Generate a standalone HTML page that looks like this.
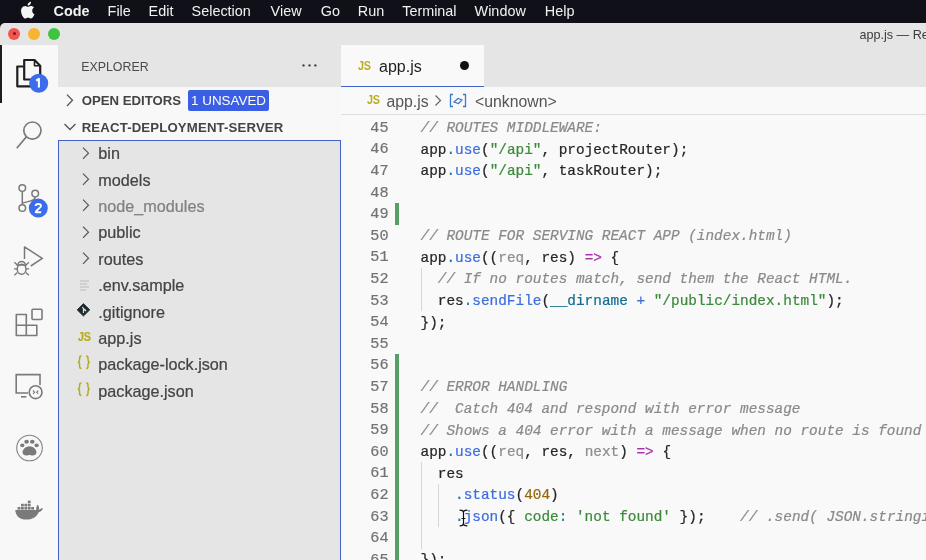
<!DOCTYPE html>
<html><head><meta charset="utf-8">
<style>
*{margin:0;padding:0;box-sizing:border-box;-webkit-font-smoothing:antialiased}
.code,.row{-webkit-text-stroke:0.22px currentColor}
html,body{width:926px;height:560px;overflow:hidden;background:#101018;font-family:"Liberation Sans",sans-serif}
.abs{position:absolute}
#menubar{left:0;top:0;width:926px;height:23px;background:#101018;color:#f2f2f2;font-size:14.4px}
#menubar span{position:absolute;top:3.3px;line-height:17px;white-space:nowrap}
#win{left:0;top:22.6px;width:926px;height:538px;background:#e5e5e5;border-top-left-radius:5px}
.tl{position:absolute;top:27.5px;width:12px;height:12px;border-radius:50%}
#title{left:859.5px;top:26.5px;font-size:12.6px;color:#3a3a3a;white-space:nowrap;line-height:16px}
#act{left:0;top:45px;width:58px;height:515px;background:#f8f8f8}
#actind{left:0;top:45px;width:2.4px;height:57.6px;background:#1e1e1e}
#side{left:58px;top:87px;width:283px;height:473px;background:#f8f8f8}
#sidehead{left:58px;top:45px;width:283px;height:42px;background:#e5e5e5}
#tree{left:58px;top:140px;width:283px;height:430px;background:#e5e5e5;border:1px solid #4262c8}
.row{position:absolute;left:0;height:26.4px;line-height:26.4px;font-size:16.2px;color:#444;white-space:nowrap}
#editor{left:341px;top:87px;width:585px;height:473px;background:#f9f9f9}
#tabbar{left:341px;top:45px;width:585px;height:42px;background:#e5e5e5}
#tab{left:341px;top:45px;width:143px;height:42px;background:#f9f9f9;border-bottom:1px solid #4262c8}
.code{position:absolute;left:341px;width:585px;height:21.6px;line-height:21.6px;font-family:"Liberation Mono",monospace;font-size:14.4px;white-space:pre;color:#262626}
.ln{position:absolute;top:-0.5px;left:0;width:47.5px;text-align:right;color:#737373;font-size:15.2px}
.tx{position:absolute;left:79.5px}
.c{color:#8a8a8a;font-style:italic}
.s{color:#3b8a3b}
.f{color:#3d6ddd}
.d{color:#1b7a99}
.k{color:#a631a6}
.n{color:#94680a}
.g{color:#8c8c8c}
.v{color:#136d8f}
.js{position:absolute;font-size:12.3px;font-weight:bold;color:#b8ae1e;letter-spacing:-0.3px;line-height:14px;transform:scaleX(0.88);transform-origin:0 0}
</style></head>
<body><div style="position:absolute;left:0;top:0;width:926px;height:560px;will-change:transform">
<div id="menubar" class="abs"><span style="left:53.6px;font-weight:bold;">Code</span><span style="left:107.6px;">File</span><span style="left:148.6px;">Edit</span><span style="left:191.6px;">Selection</span><span style="left:270.6px;">View</span><span style="left:320.8px;">Go</span><span style="left:357.8px;">Run</span><span style="left:402.2px;">Terminal</span><span style="left:474.6px;">Window</span><span style="left:544.8px;">Help</span></div>
<div id="win" class="abs"></div>
<div class="tl abs" style="left:8px;background:#f0564e"></div>
<div class="tl abs" style="left:28px;background:#f6b52f"></div>
<div class="tl abs" style="left:48px;background:#3ec43e"></div>
<div class="abs" style="left:12.5px;top:32px;width:3px;height:3px;border-radius:50%;background:#8a1010"></div>
<div id="title" class="abs">app.js — React-Deployment-Server</div>
<div id="act" class="abs"></div>
<div id="actind" class="abs"></div>
<div id="side" class="abs"></div>
<svg class="abs" style="left:0;top:0" width="58" height="560" viewBox="0 0 58 560">
 <!-- apple -->
 <g fill="#f4f4f4" transform="translate(1,-1.2)">
  <path d="M31.2 11.9c0-2.1 1.7-3.1 1.8-3.2-1-1.4-2.5-1.6-3-1.6-1.3-.1-2.5.8-3.1.8-.7 0-1.6-.8-2.7-.8-1.4 0-2.7.8-3.4 2.1-1.5 2.5-.4 6.3 1 8.4.7 1 1.5 2.1 2.6 2.1 1 0 1.4-.7 2.7-.7 1.2 0 1.6.7 2.7.7 1.1 0 1.8-1 2.5-2 .8-1.2 1.1-2.3 1.1-2.3s-2.2-.9-2.2-3.5z"/>
  <path d="M29.1 5.6c.6-.7 1-1.7.9-2.7-.8 0-1.9.6-2.5 1.3-.5.6-1 1.6-.9 2.6.9.1 1.9-.5 2.5-1.2z"/>
 </g>
 <!-- files -->
 <g fill="none" stroke="#1f1f1f" stroke-width="2.2" stroke-linejoin="round">
  <path d="M23.5 66.5 H17.3 V86.3 H31"/>
  <path d="M24.2 60 H34.5 L40.2 65.7 V79.5 H24.2 Z"/>
  <path d="M34.5 60.5 V65.7 H40" stroke-width="1.6"/>
 </g>
 <circle cx="38.7" cy="83.2" r="9.5" fill="#3a6cec"/>
 <path d="M36.2 80.6 L38.9 78.9 V87.6" fill="none" stroke="#fff" stroke-width="2.1" stroke-linejoin="round"/>
 <!-- search -->
 <g fill="none" stroke="#7a7a7a" stroke-width="1.7">
  <circle cx="32.4" cy="130.6" r="8.6"/>
  <path d="M26.3 136.9 L16.8 148.3"/>
 </g>
 <!-- source control -->
 <g fill="none" stroke="#7a7a7a" stroke-width="1.5">
  <circle cx="22.3" cy="188" r="3.3"/>
  <circle cx="35.2" cy="193.6" r="3.3"/>
  <circle cx="22.3" cy="208" r="3.3"/>
  <path d="M22.3 191.3 V204.7"/>
  <path d="M35.2 196.9 C35.2 201 28 201.5 22.6 203"/>
 </g>
 <circle cx="38.3" cy="208.1" r="9.5" fill="#3a6cec"/>
 <path d="M35.6 206 C35.6 203.4 41 203.4 41 206 C41 208 36.5 209.5 35.7 212.2 H41.2" fill="none" stroke="#fff" stroke-width="1.9" stroke-linejoin="round"/>
 <!-- run & debug -->
 <g fill="none" stroke="#7a7a7a" stroke-width="1.5" stroke-linejoin="round">
  <path d="M24.5 259 V246.9 L42.3 258.4 L30.8 266"/>
  <path d="M17.8 265 a3.8 3.6 0 0 1 7.6 0"/>
  <ellipse cx="21.6" cy="269.2" rx="4.4" ry="5"/>
  <path d="M16.3 265.2 H27 M14.3 262.3 L17.3 265 M14 268.9 H17.2 M14.3 275.2 L17.4 272.5 M28.9 262.3 L25.9 265 M29.2 268.9 H26 M28.9 275.2 L25.8 272.5" stroke-width="1.3"/>
 </g>
 <!-- extensions -->
 <g fill="none" stroke="#7a7a7a" stroke-width="1.6" stroke-linejoin="round">
  <path d="M16.3 314.5 H26.3 V325.3 H36.8 V335.5 H16.3 Z"/>
  <path d="M16.3 325.3 H26.3 V335.5"/>
  <rect x="32" y="309.2" width="10" height="10.3" rx="1"/>
 </g>
 <!-- remote explorer -->
 <g fill="none" stroke="#7a7a7a" stroke-width="1.6">
  <path d="M28 393 H16.2 V374.6 H40 V385"/>
  <path d="M21 396.8 H26.3"/>
  <circle cx="35.6" cy="392.2" r="6.4"/>
  <path d="M33 390.5 L34.6 392.2 L33 393.9 M38.3 390.5 L36.7 392.2 L38.3 393.9" stroke-width="1.1"/>
 </g>
 <!-- paw -->
 <circle cx="29.5" cy="448" r="12.8" fill="none" stroke="#858585" stroke-width="1.1"/>
 <g fill="#7a7a7a">
  <ellipse cx="26.6" cy="441.8" rx="2.3" ry="2"/>
  <ellipse cx="32.3" cy="441.8" rx="2.3" ry="2"/>
  <ellipse cx="22.3" cy="445.3" rx="2.1" ry="1.9"/>
  <ellipse cx="36.6" cy="445.3" rx="2.1" ry="1.9"/>
  <path d="M29.5 446.2 C25 446.2 22.5 450 22.5 452.3 C22.5 454.8 24.6 455.5 26.3 455.5 C27.8 455.5 28.5 454.9 29.5 454.9 C30.5 454.9 31.2 455.5 32.7 455.5 C34.4 455.5 36.5 454.8 36.5 452.3 C36.5 450 34 446.2 29.5 446.2Z"/>
 </g>
 <!-- docker -->
 <g fill="#7a7a7a">
  <path d="M15.2 510 H38 C39.5 510 40.5 509 41.5 508.3 L43 508.6 C42.3 510.5 40.8 511.8 38.7 512.2 C36.5 517 32.5 519.6 26 519.6 C20 519.6 16 516.5 15.2 510 Z"/>
  <path d="M36.2 510 C36.1 507.5 36.7 505.5 37.8 504.8 C38.9 506.2 39.4 508 38.8 510 Z"/>
  <rect x="17.6" y="507" width="2.8" height="2.6"/>
  <rect x="21" y="507" width="2.8" height="2.6"/>
  <rect x="24.4" y="507" width="2.8" height="2.6"/>
  <rect x="27.8" y="507" width="2.8" height="2.6"/>
  <rect x="31.2" y="507" width="2.8" height="2.6"/>
  <rect x="21" y="503.8" width="2.8" height="2.6"/>
  <rect x="24.4" y="503.8" width="2.8" height="2.6"/>
  <rect x="27.8" y="503.8" width="2.8" height="2.6"/>
  <rect x="27.8" y="500.6" width="2.8" height="2.6"/>
 </g>
</svg>

<div id="sidehead" class="abs"></div>
<div id="tree" class="abs"></div>

<div class="abs" style="left:81.2px;top:58.5px;font-size:12.4px;line-height:16px;color:#4a4a4a">EXPLORER</div>
<svg class="abs" style="left:299px;top:63px" width="20" height="4" viewBox="0 0 20 4"><circle cx="4.5" cy="2.4" r="1.2" fill="#444"/><circle cx="10.5" cy="2.4" r="1.2" fill="#444"/><circle cx="16.4" cy="2.4" r="1.2" fill="#444"/></svg>
<div class="abs" style="left:58px;top:87px;width:283px;height:26.4px">
  <svg class="abs" style="left:7.2px;top:7px" width="10" height="13" viewBox="0 0 10 13"><path d="M2 0.6 L7.5 6.3 L2 12" fill="none" stroke="#555" stroke-width="1.3"/></svg>
  <div class="abs" style="left:23.7px;top:1px;line-height:26.4px;font-size:13.2px;font-weight:bold;color:#444">OPEN EDITORS</div>
  <div class="abs" style="left:130.1px;top:3.2px;width:80.9px;height:20.4px;background:#3b5fe4;border-radius:2px;color:#fff;font-size:13.4px;line-height:21.4px;text-align:center">1 UNSAVED</div>
</div>
<div class="abs" style="left:58px;top:113.4px;width:283px;height:26.4px">
  <svg class="abs" style="left:5px;top:9px" width="14" height="10" viewBox="0 0 14 10"><path d="M1.5 2 L7 7.5 L12.5 2" fill="none" stroke="#555" stroke-width="1.3"/></svg>
  <div class="abs" style="left:23.7px;top:2px;line-height:26.4px;font-size:13.2px;font-weight:bold;color:#444;letter-spacing:0.15px">REACT-DEPLOYMENT-SERVER</div>
</div>

<div class="row" style="left:58px;top:140.1px;width:283px"><svg class="abs" style="left:24px;top:6.5px" width="8" height="13" viewBox="0 0 8 13"><path d="M1 0.6 L6.5 6.2 L1 11.8" fill="none" stroke="#555" stroke-width="1.2"/></svg><span class="abs" style="left:40.3px;color:#444">bin</span></div>
<div class="row" style="left:58px;top:166.5px;width:283px"><svg class="abs" style="left:24px;top:6.5px" width="8" height="13" viewBox="0 0 8 13"><path d="M1 0.6 L6.5 6.2 L1 11.8" fill="none" stroke="#555" stroke-width="1.2"/></svg><span class="abs" style="left:40.3px;color:#444">models</span></div>
<div class="row" style="left:58px;top:192.9px;width:283px"><svg class="abs" style="left:24px;top:6.5px" width="8" height="13" viewBox="0 0 8 13"><path d="M1 0.6 L6.5 6.2 L1 11.8" fill="none" stroke="#555" stroke-width="1.2"/></svg><span class="abs" style="left:40.3px;color:#808080">node_modules</span></div>
<div class="row" style="left:58px;top:219.3px;width:283px"><svg class="abs" style="left:24px;top:6.5px" width="8" height="13" viewBox="0 0 8 13"><path d="M1 0.6 L6.5 6.2 L1 11.8" fill="none" stroke="#555" stroke-width="1.2"/></svg><span class="abs" style="left:40.3px;color:#444">public</span></div>
<div class="row" style="left:58px;top:245.7px;width:283px"><svg class="abs" style="left:24px;top:6.5px" width="8" height="13" viewBox="0 0 8 13"><path d="M1 0.6 L6.5 6.2 L1 11.8" fill="none" stroke="#555" stroke-width="1.2"/></svg><span class="abs" style="left:40.3px;color:#444">routes</span></div>
<div class="row" style="left:58px;top:272.1px;width:283px"><svg class="abs" style="left:20px;top:6px" width="14" height="14" viewBox="0 0 14 14"><path d="M2 3h9M2 6h7M2 9h9M2 12h6" stroke="#c8c8c8" stroke-width="1.4"/></svg><span class="abs" style="left:40.3px;color:#444">.env.sample</span></div>
<div class="row" style="left:58px;top:298.5px;width:283px"><svg class="abs" style="left:19px;top:4.5px" width="14" height="14" viewBox="0 0 14 14"><path d="M6.45 0.6 L12.8 6.85 L6.45 13.1 L0.1 6.85Z" fill="#1f2a30" stroke="#1f2a30" stroke-width="0.8" stroke-linejoin="round"/><path d="M5.2 4.2 L8.4 7.4 M6.4 5.4 V10" stroke="#e8e8e8" stroke-width="1.1"/><circle cx="8.4" cy="7.4" r="0.9" fill="#e8e8e8"/></svg><span class="abs" style="left:40.3px;color:#444">.gitignore</span></div>
<div class="row" style="left:58px;top:324.9px;width:283px"><div class="js" style="left:20px;top:5px">JS</div><span class="abs" style="left:40.3px;color:#444">app.js</span></div>
<div class="row" style="left:58px;top:351.3px;width:283px"><svg class="abs" style="left:19px;top:4px" width="14" height="15" viewBox="0 0 14 15"><g fill="none" stroke="#b3ab25" stroke-width="1.5"><path d="M4.4 1 C2.4 1 2.6 2.5 2.6 4.5 C2.6 6 2 7 1 7.2 C2 7.4 2.6 8.4 2.6 10 C2.6 12 2.4 13.4 4.4 13.4"/><path d="M9.2 1 C11.2 1 11 2.5 11 4.5 C11 6 11.6 7 12.6 7.2 C11.6 7.4 11 8.4 11 10 C11 12 11.2 13.4 9.2 13.4"/></g></svg><span class="abs" style="left:40.3px;color:#444">package-lock.json</span></div>
<div class="row" style="left:58px;top:377.7px;width:283px"><svg class="abs" style="left:19px;top:4px" width="14" height="15" viewBox="0 0 14 15"><g fill="none" stroke="#b3ab25" stroke-width="1.5"><path d="M4.4 1 C2.4 1 2.6 2.5 2.6 4.5 C2.6 6 2 7 1 7.2 C2 7.4 2.6 8.4 2.6 10 C2.6 12 2.4 13.4 4.4 13.4"/><path d="M9.2 1 C11.2 1 11 2.5 11 4.5 C11 6 11.6 7 12.6 7.2 C11.6 7.4 11 8.4 11 10 C11 12 11.2 13.4 9.2 13.4"/></g></svg><span class="abs" style="left:40.3px;color:#444">package.json</span></div>

<div id="editor" class="abs"></div>
<div id="tabbar" class="abs"></div>
<div id="tab" class="abs"></div>

<div class="js" style="left:358.3px;top:58.5px">JS</div>
<div class="abs" style="left:379px;top:56.5px;font-size:16px;color:#1f1f1f;line-height:20px">app.js</div>
<div class="abs" style="left:459.5px;top:60.5px;width:9.5px;height:9.5px;border-radius:50%;background:#111"></div>
<div class="js" style="left:366.5px;top:93.3px">JS</div>
<div class="abs" style="left:386.5px;top:91.5px;font-size:15.8px;color:#555;line-height:20px">app.js</div>
<svg class="abs" style="left:434px;top:94px" width="8" height="13" viewBox="0 0 8 13"><path d="M1.5 1.5 L6.5 6.5 L1.5 11.5" fill="none" stroke="#666" stroke-width="1.2"/></svg>
<svg class="abs" style="left:449px;top:93px" width="18" height="15" viewBox="0 0 18 15"><path d="M4 1.5 H1.5 V13.5 H4 M14 1.5 H16.5 V13.5 H14" fill="none" stroke="#3a7bc8" stroke-width="1.3"/><path d="M5 9 L9 5.5 L13 7 L9.5 10.5Z M5 9 L9.5 10.5" fill="none" stroke="#3a7bc8" stroke-width="1.2"/></svg>
<div class="abs" style="left:475px;top:91.5px;font-size:15.8px;color:#555;line-height:20px">&lt;unknown&gt;</div>
<div class="abs" style="left:341px;top:113.6px;width:585px;height:1px;background:#dedede"></div>

<div class="code" style="top:118.2px"><span class="ln">45</span><span class="tx"><span class="c">// ROUTES MIDDLEWARE:</span></span></div>
<div class="code" style="top:139.8px"><span class="ln">46</span><span class="tx">app<span class="d">.</span><span class="f">use</span>(<span class="s">"/api"</span>, projectRouter);</span></div>
<div class="code" style="top:161.4px"><span class="ln">47</span><span class="tx">app<span class="d">.</span><span class="f">use</span>(<span class="s">"/api"</span>, taskRouter);</span></div>
<div class="code" style="top:183.0px"><span class="ln">48</span><span class="tx"></span></div>
<div class="code" style="top:204.6px"><span class="ln">49</span><span class="tx"></span></div>
<div class="code" style="top:226.2px"><span class="ln">50</span><span class="tx"><span class="c">// ROUTE FOR SERVING REACT APP (index.html)</span></span></div>
<div class="code" style="top:247.8px"><span class="ln">51</span><span class="tx">app<span class="d">.</span><span class="f">use</span>((<span class="g">req</span>, res) <span class="k">=&gt;</span> {</span></div>
<div class="code" style="top:269.4px"><span class="ln">52</span><span class="tx">  <span class="c">// If no routes match, send them the React HTML.</span></span></div>
<div class="code" style="top:291.0px"><span class="ln">53</span><span class="tx">  res<span class="d">.</span><span class="f">sendFile</span>(<span class="v">__dirname</span><span class="f"> + </span><span class="s">"/public/index.html"</span>);</span></div>
<div class="code" style="top:312.6px"><span class="ln">54</span><span class="tx">});</span></div>
<div class="code" style="top:334.2px"><span class="ln">55</span><span class="tx"></span></div>
<div class="code" style="top:355.8px"><span class="ln">56</span><span class="tx"></span></div>
<div class="code" style="top:377.4px"><span class="ln">57</span><span class="tx"><span class="c">// ERROR HANDLING</span></span></div>
<div class="code" style="top:399.0px"><span class="ln">58</span><span class="tx"><span class="c">//  Catch 404 and respond with error message</span></span></div>
<div class="code" style="top:420.6px"><span class="ln">59</span><span class="tx"><span class="c">// Shows a 404 error with a message when no route is found</span></span></div>
<div class="code" style="top:442.2px"><span class="ln">60</span><span class="tx">app<span class="d">.</span><span class="f">use</span>((<span class="g">req</span>, res, <span class="g">next</span>) <span class="k">=&gt;</span> {</span></div>
<div class="code" style="top:463.8px"><span class="ln">61</span><span class="tx">  res</span></div>
<div class="code" style="top:485.4px"><span class="ln">62</span><span class="tx">    <span class="d">.</span><span class="f">status</span>(<span class="n">404</span>)</span></div>
<div class="code" style="top:507.0px"><span class="ln">63</span><span class="tx">    <span class="d">.</span><span class="f">json</span>({ <span class="s">code</span><span class="d">:</span><span class="s"> 'not found'</span> });    <span class="c">// .send( JSON.stringify({ code: 404 }) )</span></span></div>
<div class="code" style="top:528.6px"><span class="ln">64</span><span class="tx"></span></div>
<div class="code" style="top:550.2px"><span class="ln">65</span><span class="tx">});</span></div>


<div class="abs" style="left:395.2px;top:203.2px;width:3.6px;height:21.6px;background:#55a067"></div>
<div class="abs" style="left:395.2px;top:354.4px;width:3.6px;height:206px;background:#55a067"></div>
<div class="abs" style="left:420.5px;top:268px;width:1px;height:43.2px;background:#d6d6d6"></div>
<div class="abs" style="left:420.5px;top:462.4px;width:1px;height:86.4px;background:#d6d6d6"></div>
<div class="abs" style="left:437.8px;top:483.9px;width:1px;height:43.2px;background:#d6d6d6"></div>
<svg class="abs" style="left:456px;top:505px" width="16" height="26" viewBox="0 0 16 26"><g fill="none" stroke-linecap="round"><path d="M4 5.2 Q7.5 5.2 7.5 7.5 Q7.5 5.2 11 5.2 M7.5 7.5 V18.5 M4 20.8 Q7.5 20.8 7.5 18.5 Q7.5 20.8 11 20.8 M6 13.5 H9" stroke="#fff" stroke-width="2.6"/><path d="M4 5.2 Q7.5 5.2 7.5 7.5 Q7.5 5.2 11 5.2 M7.5 7.5 V18.5 M4 20.8 Q7.5 20.8 7.5 18.5 Q7.5 20.8 11 20.8 M6 13.5 H9" stroke="#111" stroke-width="1.2"/></g></svg>

</div></body></html>
